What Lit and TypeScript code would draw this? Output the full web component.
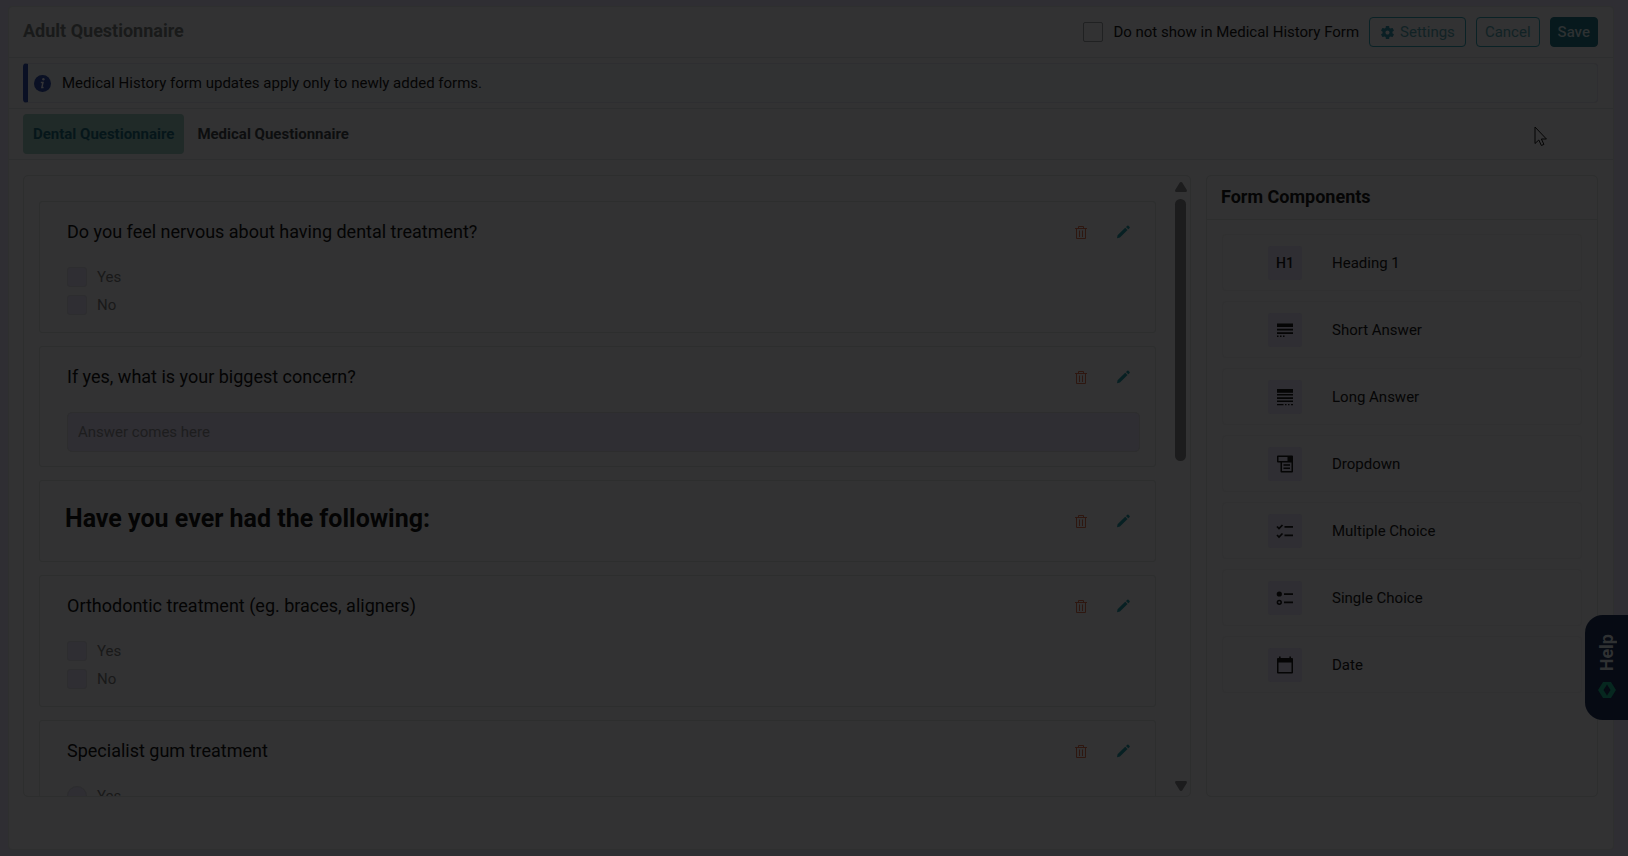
import { LitElement, html, svg, css, nothing } from "lit";
import { customElement, property, state } from "lit/decorators.js";
import { classMap } from "lit/directives/class-map.js";

const gearIcon = svg`<svg width="15" height="15" viewBox="1 1 22 22" fill="currentColor" aria-hidden="true"><path d="M19.140 12.940c.04-.3.06-.61.06-.94 0-.32-.02-.64-.07-.94l2.030-1.580c.18-.14.23-.41.12-.61l-1.920-3.320c-.12-.22-.37-.29-.59-.22l-2.390.96c-.5-.38-1.030-.7-1.620-.94l-.36-2.540c-.04-.24-.24-.41-.48-.41h-3.840c-.24 0-.43.17-.47.41l-.36 2.540c-.59.24-1.130.57-1.620.94l-2.390-.96c-.22-.08-.47 0-.59.22L2.740 8.870c-.12.21-.08.47.12.61l2.030 1.580c-.05.3-.09.63-.09.94s.02.64.07.94l-2.030 1.580c-.18.14-.23.41-.12.61l1.920 3.320c.12.22.37.29.59.22l2.390-.96c.5.38 1.030.7 1.620.94l.36 2.540c.05.24.24.41.48.41h3.840c.24 0 .44-.17.47-.41l.36-2.540c.59-.24 1.130-.56 1.620-.94l2.390.96c.22.08.47 0 .59-.22l1.920-3.320c.12-.22.07-.47-.12-.61l-2.010-1.580zM12 15c-1.650 0-3-1.350-3-3s1.350-3 3-3 3 1.350 3 3-1.350 3-3 3z"/></svg>`;

const infoIcon = svg`<svg width="17" height="17" viewBox="0 0 17 17" aria-hidden="true"><circle cx="8.500" cy="8.500" r="8.500" fill="#0a1024"/><circle cx="9.400" cy="4.300" r="1.200" fill="#343437"/><path d="M6.800 7.400h2.200l-1.100 5h1.700" fill="none" stroke="#343437" stroke-width="1.500"/></svg>`;

const trashIcon = svg`<svg width="14" height="14" viewBox="0 0 14 14" fill="none" stroke="currentColor" stroke-width="1" aria-hidden="true"><path d="M1 3.500h12M4.500 3.500v-2h5v2M2.500 3.500v10h9v-10M5.500 5.500v6.500M8.500 5.500v6.500"/></svg>`;

const pencilIcon = svg`<svg width="14" height="14" viewBox="0 0 14 14" fill="currentColor" aria-hidden="true"><path d="M1 13.300l.6-3 7.600-7.500 2.300 2.300-7.600 7.500zM10 2l1.400-1.300q.5-.4 1 0l1.200 1.200q.4.500 0 1l-1.300 1.400z"/></svg>`;

const componentIcons: Record<string, unknown> = {
  short: svg`<path d="M1 2.500h16V6H1zM1 7.700h16v1.800H1zM1 11.200h16V13H1zM1 14.500h1.500V16H1zM4 14.500h1.500V16H4zM7 14.500h1.500V16H7z"/>`,
  long: svg`<path d="M1 1h16v3.700H1zM1 6h16v1.600H1zM1 9.300h16v1.600H1zM1 12.500h16v1.600H1zM1 16h6.500v1.300H1zM9 16h1.500v1.300H9zM12 16h1.500v1.300H12zM15 16h2v1.300h-2z"/>`,
  dropdown: svg`<path fill-rule="evenodd" d="M2 .5h14a1 1 0 0 1 1 1v15a1 1 0 0 1-1 1H5.500a1 1 0 0 1-1-1V7.500H2a1 1 0 0 1-1-1v-5a1 1 0 0 1 1-1zM2.500 2v4h9V2zM6 7.500V16h9.500V7.500zM7.500 9.300H14v1.500H7.500zM7.500 12.500H14v1.500H7.500z"/>`,
  multiple: svg`<path d="M1 4.500l2 2L6.500 3M1 13l2 2 3.500-3.500M8.500 4.800H17M8.500 13.300H17" fill="none" stroke="currentColor" stroke-width="1.700"/>`,
  single: svg`<circle cx="3.300" cy="5" r="2.600"/><circle cx="3.300" cy="13.300" r="1.900" fill="none" stroke="currentColor" stroke-width="1.500"/><path d="M8 4.200h9v1.700H8zM8 12.500h9v1.700H8z"/>`,
  date: svg`<path fill-rule="evenodd" d="M3 .5h1.600V2h8.800V.5H15V2h1a1 1 0 0 1 1 1v13.500a1 1 0 0 1-1 1H2a1 1 0 0 1-1-1V3a1 1 0 0 1 1-1h1zM2.500 6.500V16h13V6.500z"/>`,
};

interface Question {
  kind: "checkbox" | "radio" | "text" | "heading";
  label: string;
  options?: string[];
}

const questions: Question[] = [
  { kind: "checkbox", label: "Do you feel nervous about having dental treatment?", options: ["Yes", "No"] },
  { kind: "text", label: "If yes, what is your biggest concern?" },
  { kind: "heading", label: "Have you ever had the following:" },
  { kind: "checkbox", label: "Orthodontic treatment (eg. braces, aligners)", options: ["Yes", "No"] },
  { kind: "radio", label: "Specialist gum treatment", options: ["Yes"] },
];

const components = [
  { id: "h1", label: "Heading 1" },
  { id: "short", label: "Short Answer" },
  { id: "long", label: "Long Answer" },
  { id: "dropdown", label: "Dropdown" },
  { id: "multiple", label: "Multiple Choice" },
  { id: "single", label: "Single Choice" },
  { id: "date", label: "Date" },
];

@customElement("question-card")
class QuestionCard extends LitElement {
  @property({ attribute: false }) question!: Question;

  static styles = css`
    :host { display: block; flex: none; }
    .card {
      box-sizing: border-box;
      border: 1px solid #2d2e2e;
      border-radius: 3px;
      padding: 14px 15px 16px 27px;
    }
    .card.heading { padding: 16px 15px 16px 25px; }
    .card.text { padding-bottom: 14px; }
    .top { display: flex; align-items: center; justify-content: space-between; min-height: 32px; }
    .title { margin: 0; font-size: 18px; font-weight: 400; line-height: 32px; color: #040404; }
    .heading .top { min-height: 48px; }
    .heading .title { font-size: 25px; font-weight: 700; line-height: 40px; padding-bottom: 4px; }
    .actions { display: flex; gap: 18px; padding-right: 5px; }
    .action {
      display: grid; place-items: center; width: 24px; height: 24px;
      padding: 0; border: 0; background: none;
    }
    .remove { color: #2e1710; }
    .edit { color: #072023; }
    .options { display: flex; flex-direction: column; gap: 6px; padding-top: 18px; }
    .option { display: flex; align-items: center; gap: 10px; line-height: 22px; font-size: 15px; color: #191919; }
    .option input {
      appearance: none; box-sizing: border-box; width: 20px; height: 20px; margin: 0;
      border: 1px solid #2d2d2f; border-radius: 3px; background: #2f2e33;
    }
    .option input[type="radio"] { border-radius: 50%; }
    .answer {
      display: block; box-sizing: border-box; width: 100%; height: 40px; margin-top: 19px;
      padding: 0 10px; border: 1px solid #2d2d2e; border-radius: 5px; background: #2f2e33;
      font: 15px Roboto, sans-serif; color: #1b1b1c;
    }
    .answer::placeholder { color: #1d1d1e; opacity: 1; }
  `;

  render() {
    const { kind, label, options } = this.question;
    return html`
      <article class=${classMap({ card: true, [kind]: true })}>
        <div class="top">
          <h2 class="title">${label}</h2>
          <div class="actions">
            <button class="action remove" aria-label="Delete">${trashIcon}</button>
            <button class="action edit" aria-label="Edit">${pencilIcon}</button>
          </div>
        </div>
        ${kind === "text"
          ? html`<input class="answer" type="text" disabled placeholder="Answer comes here" aria-label=${label} />`
          : nothing}
        ${options
          ? html`<div class="options">
              ${options.map(
                (o) => html`<label class="option"><input type=${kind} name="choice" disabled />${o}</label>`
              )}
            </div>`
          : nothing}
      </article>
    `;
  }
}

@customElement("app-root")
class AppRoot extends LitElement {
  @state() private tab = 0;

  static styles = css`
    :host {
      display: flex; flex-direction: column; box-sizing: border-box; height: 100vh;
      padding: 6px 14px 6px 8px; background: #2f2e33;
      font-family: Roboto, sans-serif; font-size: 15px; color: #050505;
    }
    .page {
      flex: 1; min-height: 0; display: flex; flex-direction: column;
      background: #323233; border: 1px solid #2e2f2f; border-radius: 4px; box-sizing: border-box;
    }
    .bar { display: flex; align-items: center; padding: 0 15px 0 14px; border-bottom: 1px solid #2d2e2f; }
    .header { height: 50px; justify-content: space-between; }
    .name { margin: 0; padding-bottom: 2px; font-size: 18px; font-weight: 700; color: #191a1a; line-height: 24px; }
    .tools { display: flex; align-items: center; gap: 10px; }
    .hide { display: flex; align-items: center; gap: 10px; }
    .hide input {
      appearance: none; width: 20px; height: 20px; box-sizing: border-box; margin: 0;
      border: 1px solid #202122; border-radius: 2px;
    }
    .button {
      display: flex; align-items: center; gap: 5px; height: 30px; padding: 0 8px; box-sizing: border-box;
      border: 1px solid #0a2226; border-radius: 4px; background: none; color: #112225;
      font: 15px Roboto, sans-serif;
    }
    .settings { padding: 0 10px; }
    .settings svg { color: #0a1f24; }
    .save { background: #07191d; border-color: #07191d; color: #2d3132; padding: 0 7px; font-weight: 500; }
    .notice-row { height: 50px; }
    .notice {
      flex: 1; display: flex; align-items: center; gap: 11px; height: 40px; box-sizing: border-box;
      padding-left: 6px; border: 1px solid #2e2e31; border-left: 5px solid #0a1024; border-radius: 4px;
      background: #313233;
    }
    .tabs { height: 50px; gap: 3px; }
    .tab {
      height: 40px; padding: 0 10px; border: 0; border-radius: 4px; background: none;
      font: 700 15px Roboto, sans-serif; color: #0d0e0f;
    }
    .tab.active { background: #202a28; color: #06161a; }
    .work {
      flex: 1; min-height: 0; display: grid; grid-template-columns: minmax(0, 1fr) 392px;
      gap: 15px; padding: 15px 15px 52px 14px;
    }
    .canvas { display: flex; min-height: 0; border: 1px solid #2d2e2e; border-radius: 5px; overflow: hidden; }
    .list { flex: 1; min-width: 0; overflow: hidden; display: flex; flex-direction: column; gap: 13px; padding: 25px 0 0 15px; }
    .rail { display: flex; flex-direction: column; align-items: center; gap: 7px; width: 11px; padding: 6px 4px 5px 19px; }
    .thumb { width: 11px; flex: 0 0 43%; border-radius: 6px; background: #1c1c1d; }
    .rail svg { flex: none; }
    .down { margin-top: auto; }
    .palette { display: flex; flex-direction: column; min-height: 0; border: 1px solid #2d2e2e; border-radius: 5px; overflow: hidden; }
    .palette-title { margin: 0; padding: 9px 14px 10px; font-size: 18px; font-weight: 700; line-height: 24px; border-bottom: 1px solid #2d2e2e; }
    .items { list-style: none; margin: 0; padding: 14px 15px; display: flex; flex-direction: column; gap: 10px; }
    .item {
      display: flex; align-items: center; gap: 30px; height: 57px; box-sizing: border-box; padding-left: 45px;
      border: 1px solid #303031; border-radius: 4px;
    }
    .tile { display: grid; place-items: center; width: 34px; height: 34px; border-radius: 3px; background: #2f2e33; font-size: 14px; font-weight: 500; }
    .help {
      position: absolute; right: 0; top: 615px; width: 43px; height: 105px; padding: 0 0 3px; border: 0;
      display: flex; flex-direction: column; align-items: center; justify-content: center; gap: 10px;
      border-radius: 18px 0 0 18px; background: #060a13; color: #2f3132;
      font: 700 18px Roboto, sans-serif;
    }
    .help-text { writing-mode: vertical-rl; transform: rotate(180deg); }
    .cursor { position: absolute; left: 1534px; top: 126px; }
  `;

  render() {
    return html`
      <main class="page">
        <header class="bar header">
          <h1 class="name">Adult Questionnaire</h1>
          <div class="tools">
            <label class="hide"><input type="checkbox" />Do not show in Medical History Form</label>
            <button class="button settings">${gearIcon}Settings</button>
            <button class="button">Cancel</button>
            <button class="button save">Save</button>
          </div>
        </header>
        <div class="bar notice-row">
          <div class="notice" role="note">${infoIcon}Medical History form updates apply only to newly added forms.</div>
        </div>
        <nav class="bar tabs">
          ${["Dental Questionnaire", "Medical Questionnaire"].map(
            (t, i) => html`<button class=${classMap({ tab: true, active: this.tab === i })} @click=${() => (this.tab = i)}>${t}</button>`
          )}
        </nav>
        <div class="work">
          <section class="canvas">
            <div class="list">${questions.map((q) => html`<question-card .question=${q}></question-card>`)}</div>
            <div class="rail" aria-hidden="true">
              <svg width="12" height="10" viewBox="0 0 12 10"><path d="M6 0q.8 0 1.300.8L11.800 8q.4 2-1 2H1.200q-1.400 0-1-2L4.700.8Q5.200 0 6 0z" fill="#1c1c1d"/></svg>
              <div class="thumb"></div>
              <svg class="down" width="12" height="10" viewBox="0 0 12 10"><path d="M6 10q-.8 0-1.300-.8L.2 2q-.4-2 1-2h9.600q1.400 0 1 2L7.300 9.200Q6.800 10 6 10z" fill="#1c1c1d"/></svg>
            </div>
          </section>
          <aside class="palette">
            <h2 class="palette-title">Form Components</h2>
            <ul class="items">
              ${components.map(
                (c) => html`<li class="item">
                  <span class="tile">${c.id === "h1"
                    ? "H1"
                    : svg`<svg width="18" height="18" viewBox="0 0 18 18" fill="currentColor" aria-hidden="true">${componentIcons[c.id]}</svg>`}</span>
                  ${c.label}
                </li>`
              )}
            </ul>
          </aside>
        </div>
      </main>
      <button class="help">
        <span class="help-text">Help</span>
        <svg width="18" height="16" viewBox="0 0 18 16" aria-hidden="true"><path fill-rule="evenodd" fill="#06271f" d="M5 0h8l5 8-5 8H5L0 8zM9 2.500L5.500 8 9 13.500 12.500 8z"/></svg>
      </button>
      <svg class="cursor" width="14" height="22" viewBox="0 0 14 22" aria-hidden="true"><path d="M1 1v16.500l3.800-3.500 2.600 5.500 2.500-1.100L7.400 13h5z" fill="#333334" stroke="#050505" stroke-width="1"/></svg>
    `;
  }
}
